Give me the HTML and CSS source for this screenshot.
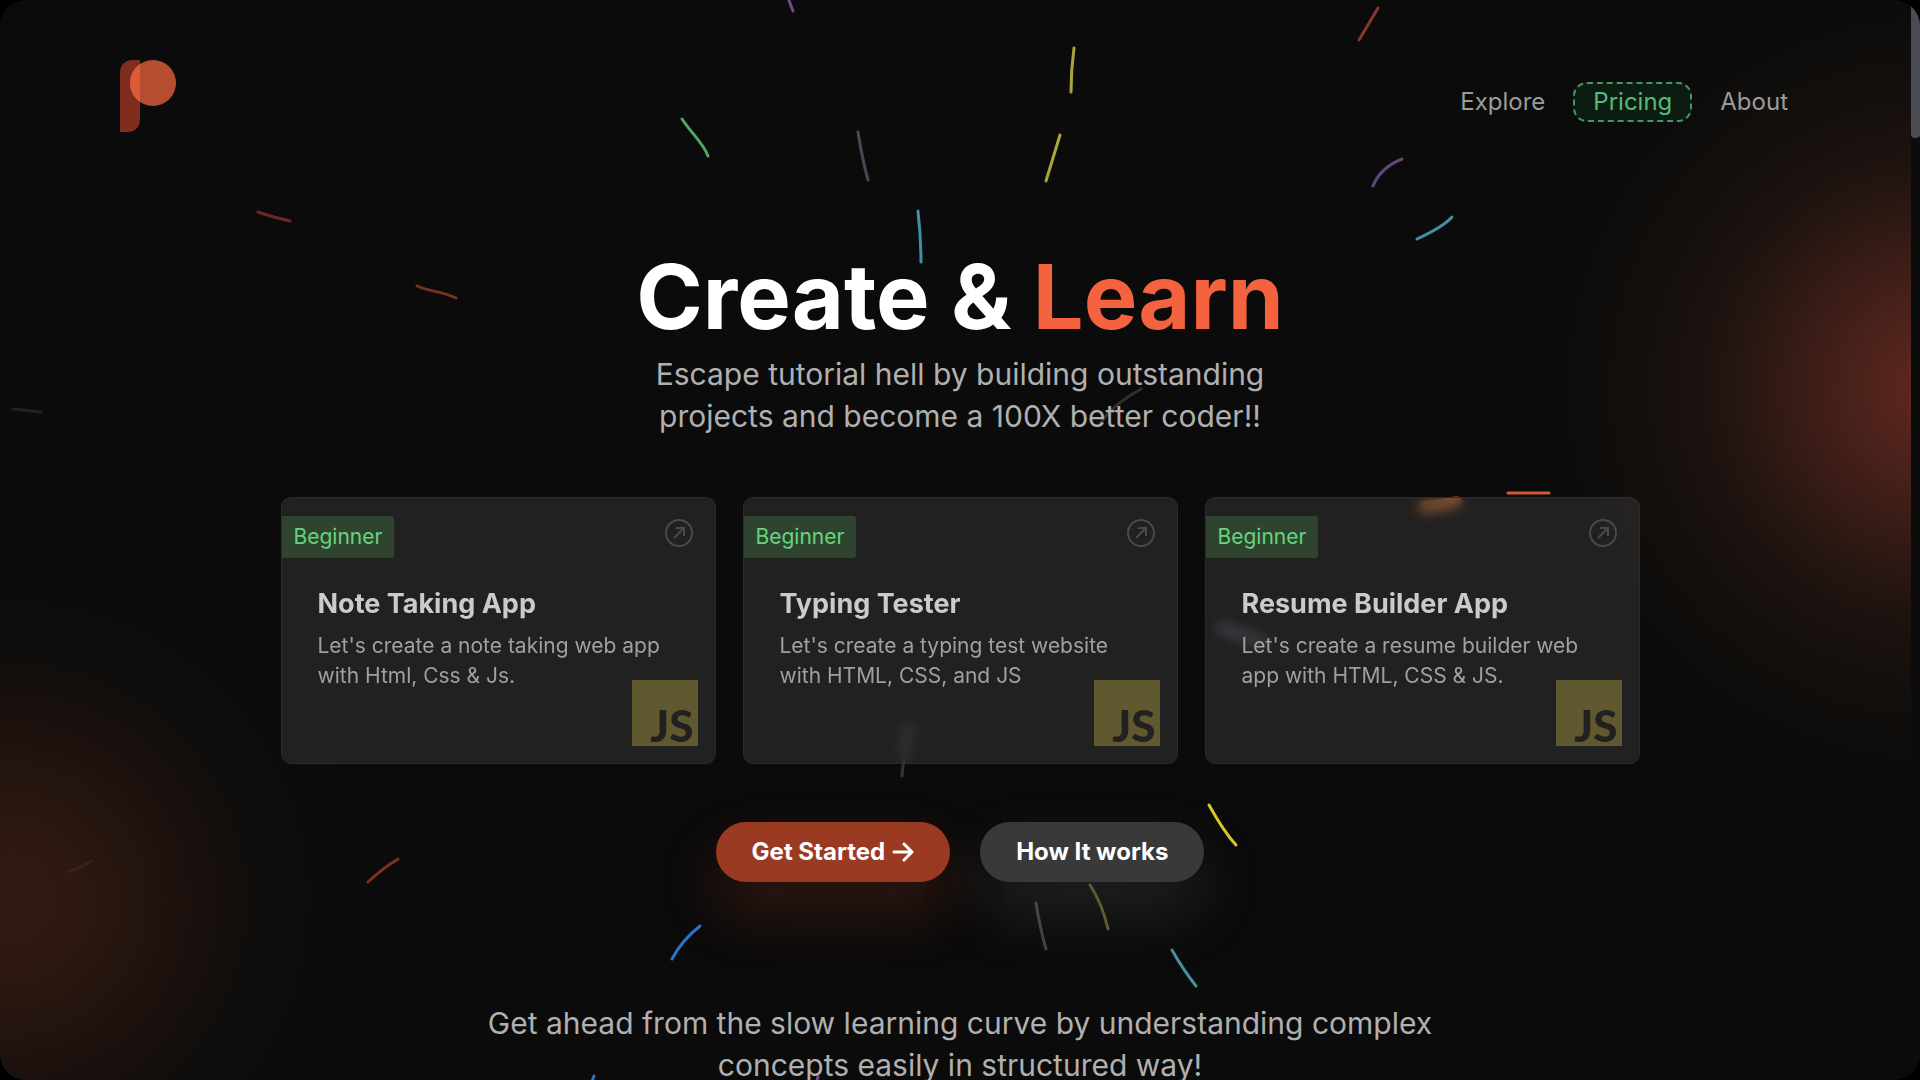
FILE: index.html
```html
<!DOCTYPE html>
<html lang="en">
<head>
<meta charset="utf-8">
<meta name="viewport" content="width=device-width, initial-scale=1">
<title>Create &amp; Learn</title>
<link rel="stylesheet" href="styles.css">
</head>
<body>
<div class="window">
  <svg class="confetti" viewBox="0 0 1920 1080" preserveAspectRatio="xMidYMin slice" aria-hidden="true">
    <path stroke="#74458a" d="M788 -2L793 11"/>
    <path stroke="#a9a53a" d="M1074 48Q1071 70 1071 92"/>
    <path stroke="#a9a53a" d="M1060 135L1046 181"/>
    <path stroke="#51a660" d="M682 119C692 134 704 144 708 156"/>
    <path stroke="#4b4855" d="M858 132Q862 158 868 180"/>
    <path stroke="#3f8eaa" d="M918 211Q921 238 921 262"/>
    <path stroke="#2f2f2f" d="M1141 389Q1112 405 1100 424"/>
    <path stroke="#84382a" d="M1378 8L1359 40"/>
    <path stroke="#634673" d="M1402 159Q1380 168 1373 186"/>
    <path stroke="#448fa5" d="M1452 217Q1443 227 1417 239"/>
    <path stroke="#692a20" d="M258 212Q272 217 290 221"/>
    <path stroke="#7c3022" d="M417 286C430 292 442 291 456 298"/>
    <path stroke="#1e2523" d="M13 409L41 412"/>
    <path stroke="#d05a35" d="M1508 493L1549 493"/>
    <path stroke="#d9c827" d="M1209 805Q1224 832 1236 845"/>
    <path stroke="#615a2a" d="M1090 885Q1102 903 1108 929"/>
    <path stroke="#424242" d="M1036 903Q1040 928 1046 949"/>
    <path stroke="#46929b" d="M1172 950Q1182 968 1196 986"/>
    <path stroke="#2f72c9" d="M700 926Q682 940 672 959"/>
    <path stroke="#2f72c9" d="M594 1076L591 1084"/>
    <path stroke="#74458a" d="M818 1077L816 1084"/>
    <path stroke="#7c3022" d="M398 859Q383 868 368 882"/>
    <path stroke="#3b1f1a" d="M92 861Q80 868 67 872"/>
    <path stroke="#34333a" d="M904 756L902 776"/>
    <path class="near" stroke="#703c1a" d="M1456 502Q1440 506 1424 507"/>
    <path class="near" stroke="#2c272f" d="M1222 628L1262 642"/>
    <path class="near" stroke="#1c1c22" d="M908 728L905 754"/>
  </svg>

  <header class="header">
    <a class="logo" href="#" aria-label="Home">
      <svg width="56" height="72" viewBox="0 0 56 72">
        <path fill="#802d20" d="M12 0H20V60A12 12 0 0 1 8 72H0V12A12 12 0 0 1 12 0Z"/>
        <circle cx="33" cy="23" r="23" fill="#b54d31"/>
        <path fill="#df5b38" d="M20 4V42A23 23 0 0 1 20 4Z"/>
      </svg>
    </a>
    <nav class="nav">
      <a href="#">Explore</a>
      <a class="pricing" href="#">Pricing</a>
      <a href="#">About</a>
    </nav>
  </header>

  <main class="hero">
    <h1>Create &amp; <span>Learn</span></h1>
    <p class="lead intro">Escape tutorial hell by building outstanding projects and become a 100X better coder!!</p>

    <section class="cards">
      <article class="card">
        <div class="card-top">
          <span class="level">Beginner</span>
          <a class="open" href="#" aria-label="Open Note Taking App"><svg width="28" height="28" viewBox="0 0 28 28"><circle cx="14" cy="14" r="13"/><path d="M9 19L19 9M11 9H19V17"/></svg></a>
        </div>
        <h2>Note Taking App</h2>
        <p>Let's create a note taking web app with Html, Css &amp; Js.</p>
        <span class="js">JS</span>
      </article>
      <article class="card">
        <div class="card-top">
          <span class="level">Beginner</span>
          <a class="open" href="#" aria-label="Open Typing Tester"><svg width="28" height="28" viewBox="0 0 28 28"><circle cx="14" cy="14" r="13"/><path d="M9 19L19 9M11 9H19V17"/></svg></a>
        </div>
        <h2>Typing Tester</h2>
        <p>Let's create a typing test website with HTML, CSS, and JS</p>
        <span class="js">JS</span>
      </article>
      <article class="card">
        <div class="card-top">
          <span class="level">Beginner</span>
          <a class="open" href="#" aria-label="Open Resume Builder App"><svg width="28" height="28" viewBox="0 0 28 28"><circle cx="14" cy="14" r="13"/><path d="M9 19L19 9M11 9H19V17"/></svg></a>
        </div>
        <h2>Resume Builder App</h2>
        <p>Let's create a resume builder web app with HTML, CSS &amp; JS.</p>
        <span class="js">JS</span>
      </article>
    </section>

    <div class="actions">
      <button class="btn primary" type="button">Get Started
        <svg width="22" height="22" viewBox="0 0 22 22" aria-hidden="true"><path d="M2 11H20M12 3L20 11L12 19"/></svg>
      </button>
      <button class="btn secondary" type="button">How It works</button>
    </div>

    <p class="lead outro">Get ahead from the slow learning curve by understanding complex concepts easily in structured way!</p>
  </main>

  <div class="scrollbar" aria-hidden="true"><div class="thumb"></div></div>
</div>
</body>
</html>
```
FILE: styles.css
```css
* { box-sizing: border-box; }

body {
  margin: 0;
  background: #000;
  font-family: Inter, "Liberation Sans", sans-serif;
}

h1, h2, p { margin: 0; }
a { color: inherit; text-decoration: none; }

.window {
  position: relative;
  height: 100vh;
  overflow: hidden;
  border-radius: 26px;
  background:
    radial-gradient(circle at calc(100% + 20px) 388px, #60271e 0, #58251d 40px, #48211a 90px, #3a1c16 140px, #291712 190px, #1c120f 240px, #120f0c 310px, #0d0c0b 380px, transparent 460px),
    radial-gradient(circle at 10px 900px, #301913 0, #2d1812 70px, #25150f 120px, #1b100d 180px, #100e0c 240px, #0d0c0b 310px, transparent 390px),
    #0b0b0b;
}

.confetti {
  position: absolute;
  inset: 0;
  width: 100%;
  height: 100%;
  fill: none;
  stroke-width: 3;
  stroke-linecap: round;
}
.confetti .near { stroke-width: 12; }

.header {
  position: relative;
  display: flex;
  justify-content: space-between;
  align-items: flex-start;
  padding: 60px 132px 0 120px;
}
.logo svg { display: block; }

.nav {
  display: flex;
  align-items: center;
  gap: 28px;
  padding-top: 22px;
  font-size: 24px;
  line-height: 36px;
  color: #9b9b9b;
}
.pricing {
  padding: 0 18px;
  border: 2px dashed #44985f;
  border-radius: 14px;
  background: #0d1c13;
  color: #52bd73;
}

.hero {
  position: relative;
  display: flex;
  flex-direction: column;
  align-items: center;
  padding: 111px 40px 0;
}

h1 {
  font-size: 90px;
  line-height: 108px;
  font-weight: 700;
  color: #fff;
}
h1 span { color: #f4623f; }

.lead {
  font-size: 30px;
  line-height: 42px;
  text-align: center;
  color: #b0b0b0;
}
.intro { max-width: 640px; margin-top: 2px; }
.outro { max-width: 1000px; margin-top: 120px; }

.cards {
  display: grid;
  grid-template-columns: repeat(3, 1fr);
  gap: 27px;
  width: 100%;
  max-width: 1359px;
  margin-top: 60px;
}
.card {
  position: relative;
  min-height: 267px;
  border: 1px solid #2c2c2c;
  border-radius: 10px;
  background: rgba(255, 255, 255, 0.09);
  backdrop-filter: blur(6px);
  color: #a0a0a0;
}
.card-top {
  display: flex;
  justify-content: space-between;
  align-items: flex-start;
  padding: 18px 22px 0 0;
}
.level {
  padding: 0 12px;
  border-radius: 0 3px 3px 0;
  background: #2e442f;
  color: #66d47f;
  font-size: 21px;
  line-height: 42px;
}
.open { padding-top: 3px; }
.open svg {
  display: block;
  fill: none;
  stroke: #4a4a4a;
  stroke-width: 2;
}
.card h2 {
  padding: 28px 36px 0;
  font-size: 27px;
  line-height: 36px;
  color: #cbcbcb;
}
.card p {
  padding: 9px 36px 0;
  font-size: 21px;
  line-height: 30px;
}
.js {
  position: absolute;
  right: 17px;
  bottom: 17px;
  width: 66px;
  height: 66px;
  padding: 21px 4px 0 0;
  background: #60582f;
  color: #212121;
  font-family: Lato, "Liberation Sans", sans-serif;
  font-size: 44px;
  font-weight: 900;
  line-height: 48px;
  text-align: right;
}

.actions {
  display: flex;
  gap: 30px;
  margin-top: 58px;
}
.btn {
  display: flex;
  align-items: center;
  gap: 7px;
  height: 60px;
  padding: 0 36px;
  border: 0;
  border-radius: 30px;
  color: #fff;
  font: 700 24px/30px Inter, "Liberation Sans", sans-serif;
}
.btn svg {
  fill: none;
  stroke: #fff;
  stroke-width: 3;
  stroke-linecap: round;
  stroke-linejoin: round;
}
.primary {
  background: #9b3a22;
  box-shadow: 0 30px 60px rgba(155, 58, 34, 0.28);
}
.secondary {
  background: #393939;
  box-shadow: 0 30px 60px rgba(100, 100, 100, 0.26);
}

.scrollbar {
  position: absolute;
  top: 0;
  right: 0;
  bottom: 0;
  width: 9px;
  background: #0c0c0c;
}
.thumb {
  height: 138px;
  border-radius: 0 0 4px 4px;
  background: #4a4b54;
}
```
